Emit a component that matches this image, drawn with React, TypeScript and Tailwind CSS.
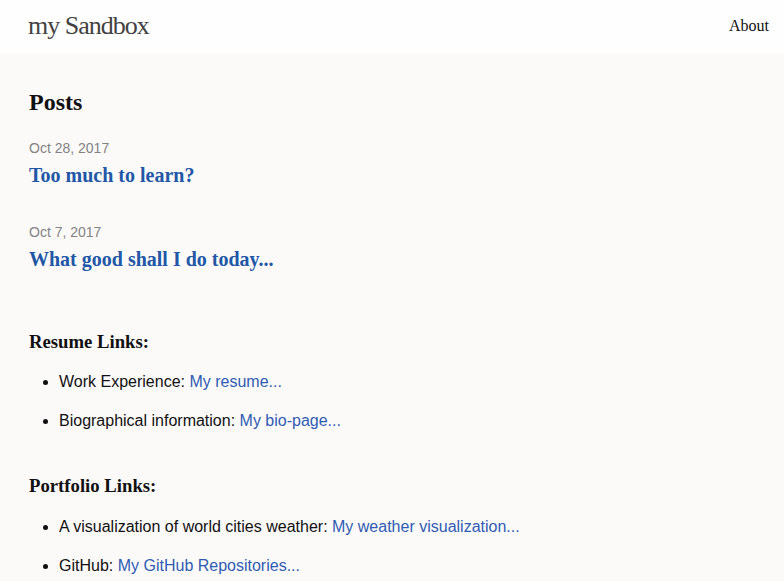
const serif = "font-['Liberation_Serif','Times_New_Roman',serif]";
const sans = "font-['Liberation_Sans',Arial,sans-serif]";

const posts = [
  { date: "Oct 28, 2017", title: "Too much to learn?" },
  { date: "Oct 7, 2017", title: "What good shall I do today..." },
];

const sections = [
  {
    heading: "Resume Links:",
    items: [
      { label: "Work Experience:", link: "My resume..." },
      { label: "Biographical information:", link: "My bio-page..." },
    ],
  },
  {
    heading: "Portfolio Links:",
    items: [
      { label: "A visualization of world cities weather:", link: "My weather visualization..." },
      { label: "GitHub:", link: "My GitHub Repositories..." },
    ],
  },
];

export default function App() {
  return (
    <div className={`min-h-[581px] bg-[#fcfaf9] ${sans} text-[#111]`}>
      <header className="h-[53px] bg-[#fefefe] flex items-center justify-between pl-[28px] pr-[15px]">
        <a href="#" className={`${serif} text-[26px] tracking-[-1px] text-[#424242] leading-none -mt-[2px]`}>
          my Sandbox
        </a>
        <a href="#" className={`${serif} text-[16px] text-[#111] leading-none -mt-[2px]`}>
          About
        </a>
      </header>

      <main className="px-[29px] pt-[35px]">
        <h2 className={`${serif} text-[24px] font-bold leading-[1.2] text-[#111]`}>Posts</h2>

        <ul className="mt-[21px]">
          {posts.map((p) => (
            <li key={p.title} className="mb-[35px]">
              <div className="text-[14px] leading-[20px] text-[#828282]">{p.date}</div>
              <a href="#" className={`block mt-[5px] ${serif} text-[20px] font-bold leading-[24px] text-[#2157a6]`}>
                {p.title}
              </a>
            </li>
          ))}
        </ul>

        {sections.map((s, i) => (
          <section key={s.heading} className={i === 0 ? "mt-[60px]" : "mt-[42px]"}>
            <h3 className={`${serif} text-[18.72px] font-bold leading-[1.2] text-[#111]`}>{s.heading}</h3>
            <ul className="mt-[17px] pl-[30px] list-disc text-[16px] leading-[24px]">
              {s.items.map((it) => (
                <li key={it.label} className="mb-[15px] last:mb-0">
                  {it.label}{" "}
                  <a href="#" className="text-[#2f5cb3]">
                    {it.link}
                  </a>
                </li>
              ))}
            </ul>
          </section>
        ))}
      </main>
    </div>
  );
}
